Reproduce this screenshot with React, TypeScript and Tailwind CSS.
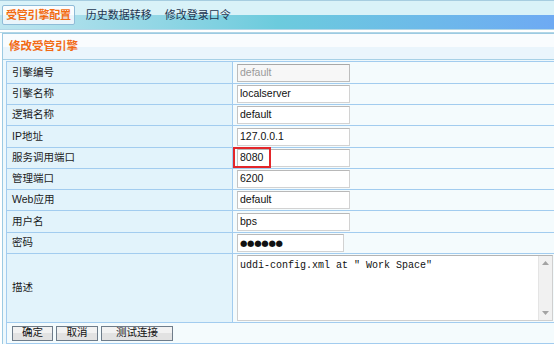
import React from 'react';

interface FieldRow {
  label: string;
  value: string;
  h: string;
  disabled?: boolean;
  password?: boolean;
  marked?: boolean;
}

const rows: FieldRow[] = [
  { label: '引擎编号', value: 'default', h: 'h-[22px]', disabled: true },
  { label: '引擎名称', value: 'localserver', h: 'h-[21px]' },
  { label: '逻辑名称', value: 'default', h: 'h-[21px]' },
  { label: 'IP地址', value: '127.0.0.1', h: 'h-[22px]' },
  { label: '服务调用端口', value: '8080', h: 'h-[21px]', marked: true },
  { label: '管理端口', value: '6200', h: 'h-[21px]' },
  { label: 'Web应用', value: 'default', h: 'h-[21px]' },
  { label: '用户名', value: 'bps', h: 'h-[22px]' },
  { label: '密码', value: '●●●●●●', h: 'h-[21px]', password: true },
];

const App: React.FC = () => {
  return (
    <div className="w-[554px] h-[346px] overflow-hidden bg-white font-['Liberation_Sans','Noto_Sans_CJK_SC',sans-serif] text-[10.5px] text-[#1b1b1b]">
      {/* tab bar: lighter top half painted with an inset shadow */}
      <div className="h-[29px] border-t border-[#a6cde0] bg-[#8ad4e3] bg-linear-to-r from-[#bde5ef] via-[#6ccbdd] to-[#6eaaf3] shadow-[inset_0_14px_0_#d9f2f8] flex items-center pl-[2px]">
        <div className="h-[20px] px-[3px] flex items-center rounded-[2px] border border-[#8fbcd8] bg-[#eaf5fb] shadow-[inset_0_9px_0_#fafdfe] text-[#f26c12] font-bold text-[11px] tracking-[-0.2px]">
          受管引擎配置
        </div>
        <div className="ml-[11px] text-[11px] text-[#1d3550]">历史数据转移</div>
        <div className="ml-[13px] text-[11px] text-[#1d3550]">修改登录口令</div>
      </div>
      <div className="h-[4px] border-t border-b border-[#b2d6e6] bg-white" />

      {/* panel */}
      <div className="ml-[2px] w-[560px] border-l border-t border-[#9ccae2] bg-[#eef8fc]">
        <div className="h-[26px] border-b border-[#a6d0e6] bg-[#eaf5fc] shadow-[inset_0_13px_0_#f9fcfe] flex items-center pl-[6px] text-[11.5px] font-bold text-[#f26a14]">
          修改受管引擎
        </div>
        <div className="pt-[1px] pl-[3px]">
          <div className="border-l border-t border-[#a2ccef]">
            {rows.map((r) => (
              <div key={r.label} className={`${r.h} flex border-b border-[#a2ccef]`}>
                <div className="w-[226px] shrink-0 border-r border-[#a2ccef] bg-[#e2f3fb] flex items-center pl-[5px]">
                  {r.label}
                </div>
                <div className="relative flex-1 bg-[#f4fbfd] flex items-center pl-[4px]">
                  <div
                    className={`h-[18px] ${r.password ? 'w-[107px]' : 'w-[113px]'} border flex items-center pl-[2px] ${
                      r.disabled
                        ? 'bg-[#f7f7f7] text-[#9a9a9a] border-[#bdbdbd] border-t-[#a8a8a8]'
                        : 'bg-white text-[#111] border-[#d2d2d2] border-t-[#b8b8b8] border-l-[#c4c4c4]'
                    } ${r.password ? 'text-[8.5px] tracking-[-0.3px] font-["DejaVu_Sans",sans-serif]' : ''}`}
                  >
                    {r.value}
                  </div>
                  {r.marked && (
                    <div className="absolute left-0 top-[-1px] w-[38px] h-[21px] border-2 border-[#e3262a]" />
                  )}
                </div>
              </div>
            ))}

            {/* description */}
            <div className="h-[69px] flex border-b border-[#a2ccef]">
              <div className="w-[226px] shrink-0 border-r border-[#a2ccef] bg-[#e2f3fb] flex items-center pl-[5px]">
                描述
              </div>
              <div className="flex-1 bg-[#f4fbfd] pl-[4px] pt-[1px]">
                <div className="w-[316px] h-[66px] border border-[#cfcfcf] border-t-[#b4b4b4] bg-white flex">
                  <div className="flex-1 pl-[2px] pt-[2px] font-['Liberation_Mono',monospace] text-[10px] text-[#111] whitespace-pre">
                    uddi-config.xml at " Work Space"
                  </div>
                  <div className="w-[14px] bg-[#f1f1f1] border-l border-[#e4e4e4] flex flex-col justify-between items-center py-[5px]">
                    <svg width="7" height="4" viewBox="0 0 7 4">
                      <path d="M0 4 L3.5 0 L7 4 Z" fill="#a3a3a3" />
                    </svg>
                    <svg width="7" height="4" viewBox="0 0 7 4">
                      <path d="M0 0 L3.5 4 L7 0 Z" fill="#a3a3a3" />
                    </svg>
                  </div>
                </div>
              </div>
            </div>

            {/* buttons */}
            <div className="h-[21px] flex items-center gap-[3px] pl-[5px] border-b border-[#a2ccef] bg-[#f4fbfd]">
              <button className="w-[41px] h-[15px] border border-[#6e7c8a] bg-[#e2e2e2] shadow-[inset_0_6px_0_#f2f2f2] flex items-center justify-center text-[#111]">
                确定
              </button>
              <button className="w-[42px] h-[15px] border border-[#6e7c8a] bg-[#e2e2e2] shadow-[inset_0_6px_0_#f2f2f2] flex items-center justify-center text-[#111]">
                取消
              </button>
              <button className="w-[72px] h-[15px] border border-[#6e7c8a] bg-[#e2e2e2] shadow-[inset_0_6px_0_#f2f2f2] flex items-center justify-center text-[#111]">
                测试连接
              </button>
            </div>
          </div>
        </div>
      </div>
    </div>
  );
};

export default App;
